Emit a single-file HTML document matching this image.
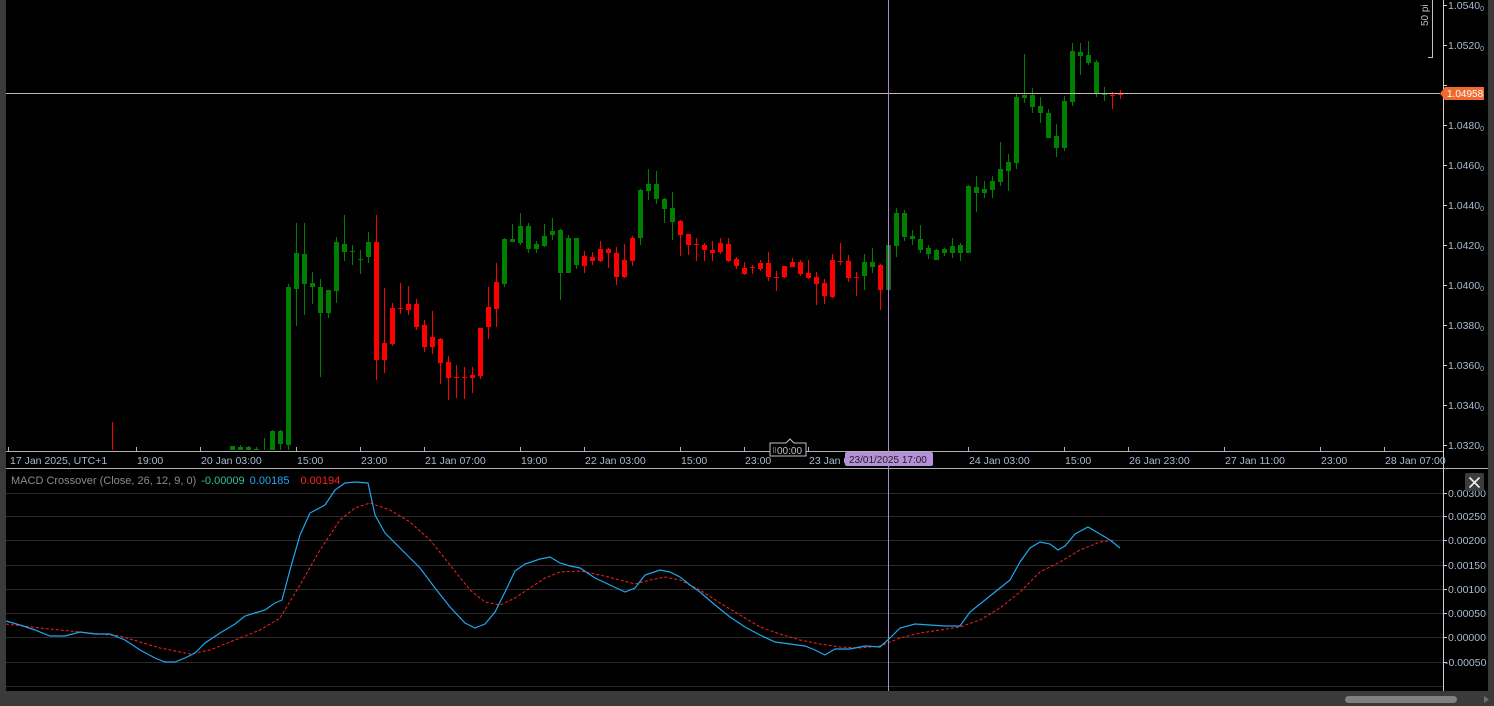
<!DOCTYPE html>
<html><head><meta charset="utf-8"><style>
html,body{margin:0;padding:0;background:#000;width:1494px;height:706px;overflow:hidden}
svg{display:block}
text{font-family:"Liberation Sans","DejaVu Sans",sans-serif}
</style></head><body>
<svg id="s" width="1494" height="706" xmlns="http://www.w3.org/2000/svg">
<rect width="1494" height="706" fill="#000"/>
<rect x="0" y="0" width="6" height="706" fill="#3a3a3a"/>
<rect x="1488" y="0" width="6" height="706" fill="#3a3a3a"/>
<rect x="0" y="691" width="1494" height="15" fill="#3a3a3a"/>
<rect x="1345" y="696" width="112" height="7" rx="3.5" fill="#808080"/>
<path d="M1484 696 L1489 699.5 L1484 703Z" fill="#707070"/>
<g id="grid" stroke="#2a2a2a" stroke-width="1"></g>
<g id="candles"></g>
<g id="macd"></g>
<line x1="1443.5" y1="0" x2="1443.5" y2="691" stroke="#d0d0d0"/>
<line x1="6" y1="451.5" x2="1443" y2="451.5" stroke="#b0b0b0"/>
<line x1="6" y1="468.5" x2="1488" y2="468.5" stroke="#b0b0b0"/>
<g id="axis" fill="#a8bcd4" font-size="10.5"></g>
<line x1="6" y1="93.5" x2="1440" y2="93.5" stroke="#c8b8b0" stroke-width="1"/>
<path d="M1440 93.5 L1445 87 L1484 87 L1484 100 L1445 100Z" fill="#f06a30"/>
<text x="1447" y="97" font-size="10" fill="#fff">1.04958</text>
<line x1="1432.5" y1="0" x2="1432.5" y2="57" stroke="#c0c0c0"/>
<line x1="1428" y1="57.5" x2="1433" y2="57.5" stroke="#c0c0c0"/>
<text transform="translate(1428,26) rotate(-90)" font-size="10" fill="#c0c0c0">50 pi</text>
<line x1="888.5" y1="0" x2="888.5" y2="691" stroke="#a888d8"/>
<rect x="845" y="452" width="88" height="14" rx="2" fill="#b490d8"/>
<text x="849" y="463" font-size="10" fill="#202020">23/01/2025 17:00</text>
<path d="M770 443 L786 443 L790 439 L794 443 L806 443 L806 456 L770 456Z" fill="#000" stroke="#c0c0c0"/>
<text x="777" y="454" font-size="10" fill="#c0c0c0">00:00</text>
<text x="772" y="453" font-size="7" fill="#c0c0c0">⠿</text>
<text x="11" y="484" font-size="11"><tspan fill="#8c8c8c">MACD Crossover (Close, 26, 12, 9, 0)</tspan><tspan fill="#30c0a0" dx="5">-0.00009</tspan><tspan fill="#20a8f0" dx="5">0.00185</tspan><tspan fill="#ff2020" dx="11">0.00194</tspan></text>
<rect x="1465" y="473" width="19" height="18" rx="2" fill="#3c3c3c"/>
<path d="M1469.5 477.5 L1479.5 487.5 M1479.5 477.5 L1469.5 487.5" stroke="#f0f0f0" stroke-width="1.6"/>
</svg>
<script>
var NS="http://www.w3.org/2000/svg";
function el(p,t,a,txt){var e=document.createElementNS(NS,t);for(var k in a)e.setAttribute(k,a[k]);if(txt!==undefined)e.textContent=txt;p.appendChild(e);return e;}
var G="#008000",R="#ff0000";
var C=[
[232,446,450,446,450,G],[240,447,450,445,450,G],[248,447,450,446,450,G],[256,449,450,447,450,G],
[264,450,450,438,450,G],[272,431,450,430,450,G],[280,431,444,430,450,G],[288,287,445,284,450,G],[296,253,289,223,326,G],[304,254,284,223,315,G],
[312,283,287,272,304,G],[320,287,313,279,377,G],[328,290,313,290,318,G],[336,242,291,237,303,G],[344,244,252,215,261,G],
[352,251,252,245,265,G],[360,259,260,250,274,G],[368,242,257,232,263,G],[376,242,360,215,380,R],[384,343,360,288,373,R],
[392,308,344,303,346,R],[400,308,309,283,314,R],[408,304,310,286,315,R],[416,304,327,299,330,R],[424,325,347,320,352,R],
[432,337,347,311,354,R],[440,339,363,338,384,R],[448,362,378,356,400,R],[456,377,378,365,398,R],[464,377,378,367,399,R],
[472,375,378,367,393,R],[480,328,376,328,379,R],[488,307,327,287,339,R],[496,282,309,263,327,R],[504,239,284,238,287,G],
[512,239,242,224,242,G],[520,226,243,213,245,G],[528,226,249,223,253,G],[536,244,249,241,253,G],[544,236,246,224,247,G],
[552,231,235,218,240,G],[560,230,273,229,300,G],[568,238,273,235,273,G],[576,238,265,238,269,G],[584,256,266,251,273,R],
[592,257,261,252,265,R],[600,249,261,241,262,R],[608,249,253,248,268,R],[616,253,277,247,285,R],[624,260,277,244,278,R],
[632,238,261,236,266,R],[640,190,238,189,245,G],[648,184,191,169,200,G],[656,184,199,171,204,G],[664,199,209,198,223,G],
[672,208,222,192,240,G],[680,221,235,220,256,R],[688,234,245,234,255,R],[696,244,245,238,261,R],[704,245,250,243,261,R],
[712,250,253,241,261,R],[720,243,252,238,254,R],[728,244,261,238,262,R],[736,259,266,257,269,R],[744,268,274,262,275,R],
[752,267,268,265,274,R],[760,263,269,260,271,R],[768,263,277,252,281,R],[776,277,278,271,291,R],[784,266,277,266,278,R],
[792,262,267,258,267,R],[800,262,274,260,276,R],[808,273,278,260,279,R],[816,277,284,272,305,R],[824,283,296,279,304,R],
[832,260,297,254,298,R],[840,261,262,243,265,R],[848,261,278,255,282,R],[856,277,278,272,296,R],[864,262,276,254,290,G],
[872,262,267,248,273,G],[880,265,290,264,310,R],[888,245,290,245,290,"#1a6a1a"],[896,213,246,208,257,G],[904,213,237,210,241,G],
[912,236,239,230,245,G],[920,239,250,225,253,G],[928,248,254,245,259,G],[936,250,260,249,260,G],[944,249,253,248,256,G],
[952,246,253,238,258,G],[960,245,253,243,261,G],[968,186,253,185,253,G],[976,187,193,176,212,G],[984,189,193,181,198,G],
[992,181,190,176,198,G],[1000,169,182,142,186,G],[1008,162,171,154,191,G],[1016,97,163,94,169,G],[1024,95,98,54,103,G],
[1032,95,107,88,113,G],[1040,106,113,97,123,G],[1048,113,138,109,138,G],[1056,136,148,124,157,G],[1064,101,148,96,151,G],
[1072,51,102,43,106,G],[1080,52,56,43,75,G],[1088,55,63,41,65,G],[1096,62,94,60,97,G],[1104,94,95,87,101,G],
[1112,95,96,92,109,R],[1120,93,95,90,99,R]];
var cg=document.getElementById("candles");
el(cg,"rect",{x:112,y:422,width:1,height:28,fill:R});
C.forEach(function(c){
 el(cg,"rect",{x:c[0],y:c[3],width:1,height:Math.min(c[4],450)-c[3],fill:c[5]});
 var h=Math.max(1,c[2]-c[1]);
 el(cg,"rect",{x:c[0]-2,y:c[1],width:5,height:Math.min(h,450-c[1]),fill:c[5]});
});
var gg=document.getElementById("grid");
[493,516,540,565,589,613,637,662,686].forEach(function(y){el(gg,"line",{x1:6,x2:1443,y1:y+.5,y2:y+.5});});
var ax=document.getElementById("axis");
var svg=document.getElementById("s");
for(var i=0;i<=11;i++){var y=5+i*40,v=(1.0540-i*0.0020).toFixed(4);
 if(i==2)continue;
 el(svg,"line",{x1:1443,x2:1447,y1:y+.5,y2:y+.5,stroke:"#d0d0d0"});
 var t=el(ax,"text",{x:1448,y:y+4},v);el(t,"tspan",{"font-size":"7",dy:"2"},"0");}
el(svg,"line",{x1:1443,x2:1447,y1:85.5,y2:85.5,stroke:"#d0d0d0"});
var mv=[["0.00300",493],["0.00250",516],["0.00200",540],["0.00150",565],["0.00100",589],["0.00050",613],["0.00000",637],["-0.00050",662]];
mv.forEach(function(m){el(svg,"line",{x1:1443,x2:1447,y1:m[1]+.5,y2:m[1]+.5,stroke:"#d0d0d0"});
 el(ax,"text",{x:m[0][0]=="-"?1445:1448,y:m[1]+4},m[0]);});
var tl=[["17 Jan 2025, UTC+1",10,8],["19:00",137,136],["20 Jan 03:00",201,200],["15:00",297,296],["23:00",361,360],["21 Jan 07:00",425,424],["19:00",521,520],["22 Jan 03:00",585,584],["15:00",681,680],["23:00",745,744],["23 Jan 0",809,808],["24 Jan 03:00",969,968],["15:00",1065,1064],["26 Jan 23:00",1129,1128],["27 Jan 11:00",1225,1224],["23:00",1321,1320],["28 Jan 07:00",1385,1384]];
tl.forEach(function(t){el(svg,"line",{x1:t[2]+.5,x2:t[2]+.5,y1:447,y2:451,stroke:"#b0b0b0"});el(ax,"text",{x:t[1],y:464},t[0]);});
var B=[[6,621],[20,625],[35,630],[50,636],[65,636],[80,632],[95,634],[110,634],[125,640],[140,650],[155,658],[165,662],[175,662],[185,658],[195,653],[205,643],[220,633],[235,624],[245,616],[255,613],[265,610],[275,603],[282,600],[290,570],[300,535],[310,513],[325,505],[335,490],[345,483],[355,482],[368,483],[375,515],[385,533],[395,543],[405,553],[420,568],[435,588],[450,607],[465,623],[475,628],[485,624],[495,612],[505,592],[515,571],[525,564],[540,559],[550,557],[560,563],[570,566],[580,568],[595,578],[610,585],[625,592],[635,588],[645,575],[660,570],[670,572],[680,577],[690,585],[700,592],[715,605],[730,617],[745,627],[760,635],[775,642],[790,644],[805,646],[815,650],[825,655],[835,649],[850,649],[865,646],[880,647],[890,638],[900,628],[915,624],[930,625],[945,626],[960,626],[970,612],[985,600],[1000,588],[1010,580],[1020,562],[1030,548],[1040,542],[1050,544],[1058,550],[1065,546],[1075,534],[1088,527],[1100,534],[1110,540],[1120,548]];
var Rd=[[6,624],[40,628],[80,632],[120,636],[160,648],[190,654],[210,650],[230,642],[260,630],[280,618],[300,585],[320,550],[340,520],[355,508],[370,503],[390,510],[410,522],[430,540],[450,565],[470,590],[485,602],[500,605],[515,598],[530,588],[545,578],[560,572],[580,571],[600,575],[620,580],[635,584],[650,580],[665,577],[680,580],[700,590],[720,603],[740,615],[760,627],[780,634],[800,640],[820,644],[840,647],[860,648],[880,646],[900,638],[920,633],[940,630],[960,627],[980,620],[1000,608],[1020,592],[1040,572],[1060,562],[1080,550],[1100,542],[1115,540]];
var mg=document.getElementById("macd");
el(mg,"polyline",{points:Rd.join(" "),fill:"none",stroke:"#ff2020","stroke-width":1,"stroke-dasharray":"3,2"});
el(mg,"polyline",{points:B.join(" "),fill:"none",stroke:"#1ea8f0","stroke-width":1.2});
</script>
</body></html>
